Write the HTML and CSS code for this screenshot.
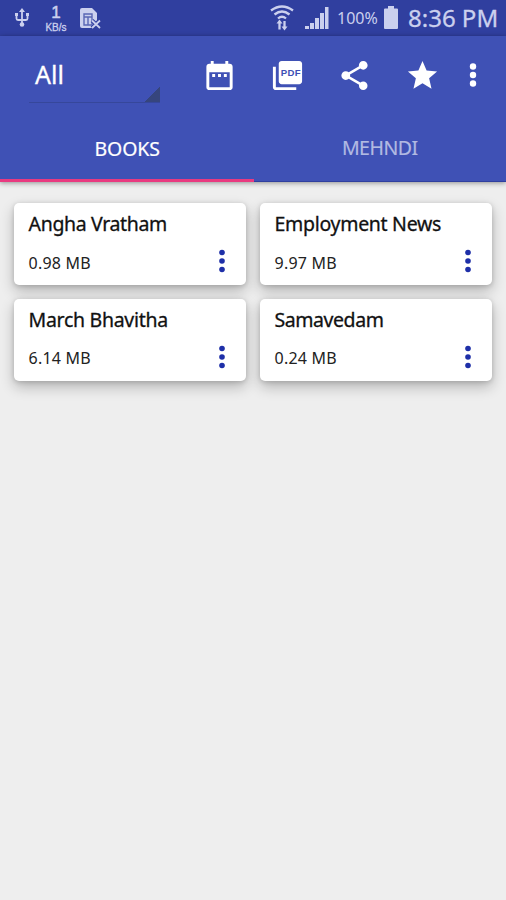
FILE: index.html
```html
<!DOCTYPE html>
<html lang="en">
<head>
<meta charset="utf-8">
<title>Books</title>
<link rel="stylesheet" href="styles.css">
</head>
<body>
<div class="status">
  <svg class="usb" viewBox="0 0 16 20"><path d="M8 2v14M2.500 7v3.500q0 1.500 1.500 1.500h8q1.500 0 1.500-1.500V7" /><path class="solid" d="M8 0l3 4H5zM1 5h3v3H1zM12 5h3v3h-3z"/><circle class="solid" cx="8" cy="16.500" r="2.300"/></svg>
  <div class="rate"><span class="rate-n">1</span><span class="rate-u">KB/s</span></div>
  <svg class="sim" viewBox="0 0 22 23"><path class="solid" d="M2 1h10l5 5v7l-4 8H2Q0 21 0 19V3q0-2 2-2z"/><path class="sim-lines" d="M4 7h8v11H4zM4 10h8M8 10v8"/><path class="cross-bg" d="M12 13.500l8 7.500m0-7.500l-8 7.500"/><path class="cross" d="M12 13.500l8 7.500m0-7.500l-8 7.500"/></svg>
  <span class="spacer"></span>
  <svg class="wifi" viewBox="0 0 24 26"><path d="M1 5.500q11-8 22 0M4.500 9.500q7.500-6 15 0M8 13.500q4-3.500 8 0"/><path class="arrows" d="M9.500 18v6.500M14.500 16v6"/><path class="solid" d="M9.500 14.500l3 4h-6zM14.500 25.500l-3-4h6z"/></svg>
  <svg class="signal" viewBox="0 0 24 22"><path class="solid" d="M0 19h4v3H0zM5 16h4v6H5zM10 11h4v11h-4zM15 6h4v16h-4zM20 0h3.500v22H20z"/></svg>
  <span class="percent">100%</span>
  <svg class="battery" viewBox="0 0 14 23"><path class="solid" d="M4 0h6v2.500h3q1 0 1 1V22q0 1-1 1H1q-1 0-1-1V3.500q0-1 1-1h3z"/></svg>
  <span class="clock">8:36 PM</span>
</div>
<header class="appbar">
  <div class="toolbar">
    <div class="spinner"><span class="spinner-text">All</span></div>
    <svg class="icon" viewBox="0 0 24 24"><path d="M9 11H7v2h2v-2zm4 0h-2v2h2v-2zm4 0h-2v2h2v-2zm2-7h-1V2h-2v2H8V2H6v2H5c-1.110 0-1.990.9-1.990 2L3 20c0 1.100.89 2 2 2h14c1.100 0 2-.9 2-2V6c0-1.100-.9-2-2-2zm0 16H5V9.700h14v10.300z"/></svg>
    <svg class="icon" viewBox="0 0 24 24"><path d="M20 2H8c-1.100 0-2 .9-2 2v12c0 1.100.9 2 2 2h12c1.100 0 2-.9 2-2V4c0-1.100-.9-2-2-2zM4 6H2v14c0 1.100.9 2 2 2h14v-2H4V6z"/><text class="pdf" x="7.300" y="12.600">PDF</text></svg>
    <svg class="icon" viewBox="0 0 24 24"><path d="M18 16.080c-.76 0-1.440.3-1.960.77L8.910 12.700c.05-.23.09-.46.09-.7s-.04-.47-.09-.7l7.050-4.110c.54.5 1.250.81 2.040.81 1.660 0 3-1.340 3-3s-1.340-3-3-3-3 1.340-3 3c0 .24.04.47.09.7L8.040 9.810C7.500 9.310 6.790 9 6 9c-1.660 0-3 1.340-3 3s1.340 3 3 3c.79 0 1.500-.31 2.040-.81l7.120 4.160c-.05.21-.08.43-.08.65 0 1.610 1.310 2.920 2.920 2.920s2.920-1.310 2.920-2.920-1.310-2.920-2.920-2.920z"/></svg>
    <svg class="icon" viewBox="0 0 24 24"><path d="M12 17.270L18.180 21l-1.640-7.030L22 9.240l-7.190-.61L12 2 9.190 8.630 2 9.240l5.460 4.730L5.820 21z"/></svg>
    <svg class="overflow" viewBox="0 0 8 26"><circle cx="4" cy="4.500" r="3.200"/><circle cx="4" cy="13" r="3.200"/><circle cx="4" cy="21.500" r="3.200"/></svg>
  </div>
  <nav class="tabs"><div class="tab active"><span>BOOKS</span></div><div class="tab"><span>MEHNDI</span></div></nav>
</header>
<main class="grid">
  <article class="card"><h2 class="t1">Angha Vratham</h2><div class="row"><span>0.98 MB</span><svg class="more" viewBox="0 0 6 24"><circle cx="3" cy="3.500" r="2.800"/><circle cx="3" cy="12" r="2.800"/><circle cx="3" cy="20.500" r="2.800"/></svg></div></article>
  <article class="card"><h2 class="t2">Employment News</h2><div class="row"><span>9.97 MB</span><svg class="more" viewBox="0 0 6 24"><circle cx="3" cy="3.500" r="2.800"/><circle cx="3" cy="12" r="2.800"/><circle cx="3" cy="20.500" r="2.800"/></svg></div></article>
  <article class="card"><h2 class="t3">March Bhavitha</h2><div class="row"><span>6.14 MB</span><svg class="more" viewBox="0 0 6 24"><circle cx="3" cy="3.500" r="2.800"/><circle cx="3" cy="12" r="2.800"/><circle cx="3" cy="20.500" r="2.800"/></svg></div></article>
  <article class="card"><h2 class="t4">Samavedam</h2><div class="row"><span>0.24 MB</span><svg class="more" viewBox="0 0 6 24"><circle cx="3" cy="3.500" r="2.800"/><circle cx="3" cy="12" r="2.800"/><circle cx="3" cy="20.500" r="2.800"/></svg></div></article>
</main>
</body>
</html>
```
FILE: styles.css
```css
* { box-sizing: border-box; }
body { margin: 0; height: 900px; overflow: hidden; background: #eeeeee; font-family: "Noto Sans", sans-serif; }
svg { display: block; flex: none; }
.status { height: 36px; background: #303f9f; display: flex; align-items: center; padding: 0 8px 0 14px; color: #cbd0ee; }
.status svg { fill: none; stroke: #cbd0ee; stroke-width: 1.8; }
.status .solid { fill: #cbd0ee; stroke: none; }
.usb { width: 16px; height: 20px; }
.rate { width: 26px; height: 32px; margin-left: 13px; display: flex; flex-direction: column; align-items: center; font-family: "Liberation Sans", sans-serif; }
.rate-n { font-size: 17px; line-height: 19px; margin-top: 1px; -webkit-text-stroke: 0.5px; }
.rate-u { font-size: 10px; line-height: 12px; -webkit-text-stroke: 0.3px; }
.sim { width: 22px; height: 23px; margin-left: 11px; }
.status .sim-lines { stroke: #5966b4; stroke-width: 1.4; }
.status .cross-bg { stroke: #303f9f; stroke-width: 4; }
.spacer { flex: 1; }
.wifi { width: 24px; height: 26px; margin-right: 11px; }
.status .wifi { stroke-width: 2.3; }
.signal { width: 24px; height: 22px; margin-right: 8px; }
.percent { width: 41px; margin-right: 6px; font-size: 16px; white-space: nowrap; }
.battery { width: 14px; height: 23px; margin: 0 10px 2px 0; }
.clock { width: 90px; font-size: 24px; line-height: 36px; white-space: nowrap; -webkit-text-stroke: 0.3px; }
.appbar { height: 146px; background: #3f51b5; color: #fff; position: relative; box-shadow: 0 1px 5px rgba(0,0,0,.4); }
.toolbar { height: 78px; display: flex; align-items: center; padding-left: 29px; }
.spinner { width: 131px; height: 54px; margin: 13px 42px 0 0; align-self: flex-start; padding: 7px 0 0 6px; border-bottom: 1px solid #36479b; background: linear-gradient(135deg, transparent 50%, #36457d 51%) right bottom / 16px 16px no-repeat; }
.spinner-text { font-size: 25px; line-height: 36px; -webkit-text-stroke: 0.3px; }
.icon { width: 35px; height: 35px; margin-right: 32.5px; fill: #fff; }
.pdf { font-family: "Liberation Sans", sans-serif; font-weight: 700; font-size: 6.6px; letter-spacing: 0.3px; fill: #3f51b5; }
.icon:nth-of-type(4) { margin-right: 29px; }
.overflow { width: 8px; height: 26px; fill: #fff; }
.tabs { height: 68px; display: flex; }
.tab { flex: 1; height: 68px; display: flex; align-items: center; justify-content: center; font-size: 19.5px; letter-spacing: -0.5px; color: #b2bae2; -webkit-text-stroke: 0.2px; border-bottom: 1px solid #303f9f; }
.tab.active { color: #fff; border-bottom: 3px solid #e93a80; padding: 3px 0 0 1px; letter-spacing: -0.1px; }
.grid { display: grid; grid-template-columns: 232px 232px; gap: 13.5px 14px; padding: 21px 0 0 14.4px; }
.card { height: 82px; padding: 6px 21px 0 14.2px; background: #fff; border-radius: 5px; box-shadow: 0 6px 14px rgba(0,0,0,.24), 0 1px 5px rgba(0,0,0,.16); }
h2 { margin: 0; font-size: 19.5px; line-height: 30px; font-weight: 400; letter-spacing: -0.3px; color: #111; white-space: nowrap; -webkit-text-stroke: 0.3px; }
.t1 { letter-spacing: -0.35px; }
.t4 { letter-spacing: -0.45px; }
.row { height: 44px; display: flex; align-items: center; justify-content: space-between; font-size: 16px; letter-spacing: 0.2px; color: #222; }
.row span { padding-top: 3px; }
.more { width: 6px; height: 24px; fill: #1e2fa8; }
```
